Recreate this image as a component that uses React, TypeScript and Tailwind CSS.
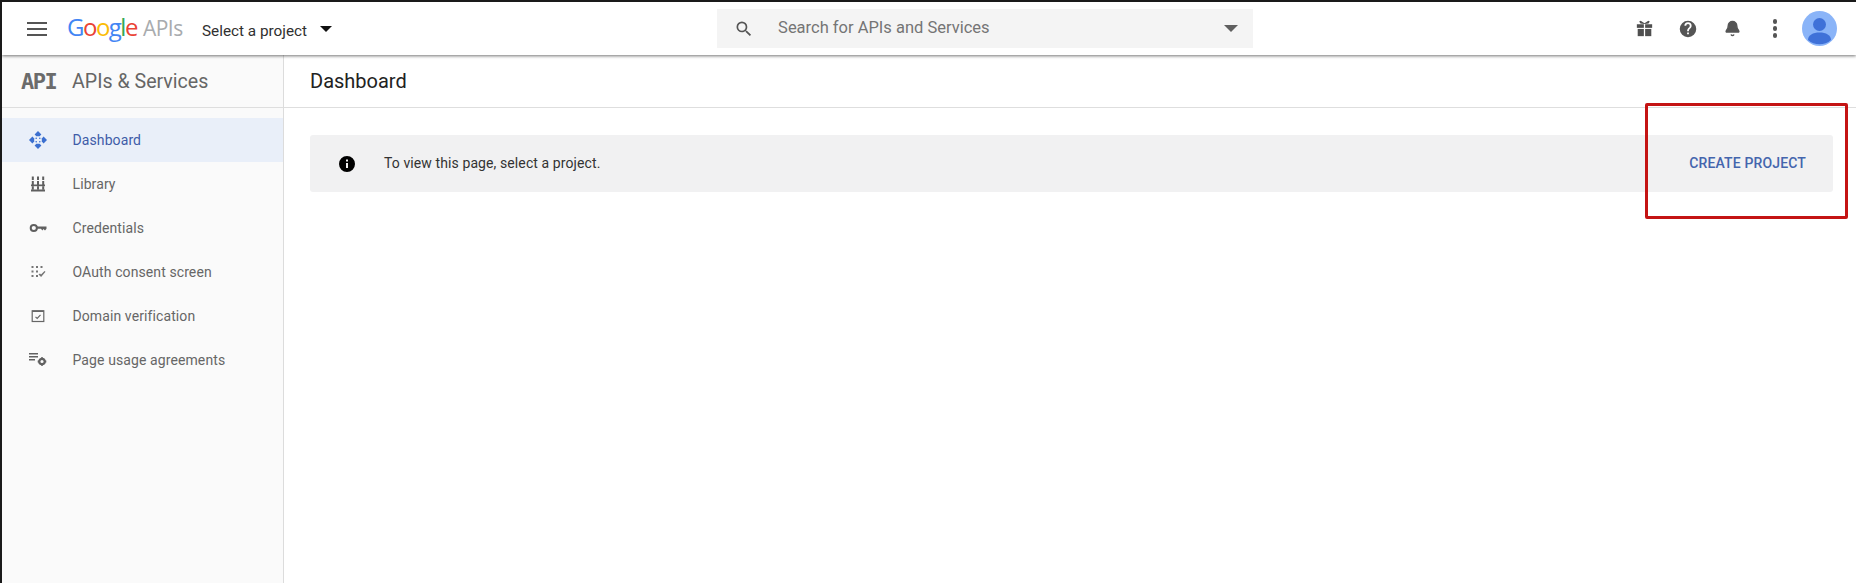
import { Bell } from "lucide-react";

const NAV_ITEMS = [
  { label: "Dashboard", icon: <DashboardIcon />, active: true },
  { label: "Library", icon: <LibraryIcon /> },
  { label: "Credentials", icon: <KeyIcon /> },
  { label: "OAuth consent screen", icon: <ConsentIcon /> },
  { label: "Domain verification", icon: <VerifyIcon /> },
  { label: "Page usage agreements", icon: <AgreementIcon /> },
];

function DashboardIcon() {
  return (
    <svg width="18" height="18" viewBox="0 0 18 18" fill="#3b6fd0">
      <path d="M9 0 12.400 3.400 10.600 5.200H7.400L5.600 3.400Z" />
      <path d="M9 18 12.400 14.600 10.600 12.800H7.400L5.600 14.600Z" />
      <path d="M0 9 3.400 5.600 5.200 7.400V10.600L3.400 12.400Z" />
      <path d="M18 9 14.600 5.600 12.800 7.400V10.600L14.600 12.400Z" />
      <circle cx="7.200" cy="7.200" r="0.800" />
      <circle cx="10.800" cy="7.200" r="0.800" />
      <circle cx="7.200" cy="10.800" r="0.800" />
      <circle cx="10.800" cy="10.800" r="0.800" />
    </svg>
  );
}

function LibraryIcon() {
  return (
    <svg width="16" height="16" viewBox="0 0 16 16" fill="#5f5f5f">
      <rect x="1.800" y="0.500" width="2" height="3.500" />
      <rect x="7" y="0.500" width="2" height="3.500" />
      <rect x="12.200" y="0.500" width="2" height="3.500" />
      <rect x="1.800" y="5" width="2" height="4" />
      <rect x="7" y="5" width="2" height="4" />
      <rect x="12.200" y="5" width="2" height="4" />
      <rect x="1" y="8.500" width="14" height="1.700" />
      <rect x="1.800" y="10.200" width="2" height="3.500" />
      <rect x="7" y="10.200" width="2" height="3.500" />
      <rect x="12.200" y="10.200" width="2" height="3.500" />
      <rect x="1" y="13.500" width="14" height="2" />
    </svg>
  );
}

function KeyIcon() {
  return (
    <svg width="18" height="18" viewBox="0 0 18 18" fill="none">
      <circle cx="4.800" cy="9" r="3.100" stroke="#5f5f5f" strokeWidth="2" />
      <path d="M8 7.600h9.500v2.200l-1.500 1.800-1.500-1.500-1.200 1.400-1.300-1.700H8Z" fill="#5f5f5f" />
    </svg>
  );
}

function ConsentIcon() {
  return (
    <svg width="16" height="16" viewBox="0 0 16 16" fill="#757575">
      <rect x="1.500" y="2" width="2" height="2" />
      <rect x="6" y="2" width="2" height="2" />
      <rect x="10.500" y="2" width="2" height="2" />
      <rect x="1.500" y="6.500" width="2" height="2" />
      <rect x="6" y="6.500" width="2" height="2" />
      <rect x="1.500" y="11" width="2" height="2" />
      <rect x="6" y="11" width="2" height="2" />
      <path d="M8.500 10.500 10 9.500l1 1 3.500-3.500 1 .8-4.400 5.200Z" />
    </svg>
  );
}

function VerifyIcon() {
  return (
    <svg width="14" height="14" viewBox="0 0 14 14" fill="none">
      <rect x="1.200" y="1.800" width="11.600" height="10.700" stroke="#666" strokeWidth="1.200" />
      <rect x="1.200" y="1.500" width="11.600" height="1.500" fill="#666" />
      <path d="M4.500 7.800 6.200 9.500 9.500 5.800" stroke="#666" strokeWidth="1.200" />
    </svg>
  );
}

function AgreementIcon() {
  return (
    <svg width="18" height="18" viewBox="0 0 18 18" fill="#616161">
      <rect x="0" y="2" width="9" height="1.500" />
      <rect x="0" y="5" width="9" height="1.500" />
      <rect x="0" y="8" width="6" height="1.500" />
      <circle cx="13" cy="10.500" r="2.700" fill="none" stroke="#616161" strokeWidth="2.200" />
      <path d="M12 6.200h2v1.600h-2ZM12 13.200h2v1.600h-2ZM8.700 9.500h1.600v2H8.700ZM15.700 9.500h1.600v2h-1.600Z" />
    </svg>
  );
}

function GiftIcon() {
  return (
    <svg className="mr-[26px]" width="17" height="17" viewBox="0 0 16 16" fill="#4f4f4f">
      <rect x="0.800" y="4" width="6.600" height="3.400" />
      <rect x="8.600" y="4" width="6.600" height="3.400" />
      <rect x="1.600" y="8.400" width="5.800" height="6.800" />
      <rect x="8.600" y="8.400" width="5.800" height="6.800" />
      <path d="M8 3.800 4.200 3.400 3 1.500 4.400.6 8 3 11.600.6 13 1.500 11.800 3.400Z" />
    </svg>
  );
}

export default function App() {
  return (
    <div className="relative flex h-[583px] w-[1856px] flex-col overflow-hidden border-t-2 border-l-2 border-[#1a1a1a] bg-white font-['Roboto',sans-serif]">
      <header className="relative z-10 flex h-[53px] shrink-0 items-center bg-white shadow-[0_1px_3px_rgba(0,0,0,0.55)]">
        <button className="ml-[25px] flex w-[20px] flex-col gap-[4px]">
          <span className="h-[2px] bg-[#555]" />
          <span className="h-[2px] bg-[#555]" />
          <span className="h-[2px] bg-[#555]" />
        </button>
        <div className="ml-[20px] flex w-[120px] items-baseline pb-[3px] font-['Open_Sans',sans-serif]">
          <span className="text-[24px] font-medium tracking-[-1.500px]">
            <span className="text-[#4285f4]">G</span>
            <span className="text-[#ea4335]">o</span>
            <span className="text-[#fbbc05]">o</span>
            <span className="text-[#4285f4]">g</span>
            <span className="text-[#34a853]">l</span>
            <span className="text-[#ea4335]">e</span>
          </span>
          <span className="ml-[6px] text-[21px] tracking-[-0.500px] text-[#a8abae]">APIs</span>
        </div>
        <span className="ml-[15px] pt-[5px] text-[15.300px] text-[#303030]">Select a project</span>
        <span className="mt-[1px] ml-[13px] h-0 w-0 border-x-[6px] border-t-[6px] border-x-transparent border-t-[#111]" />
        <div className="ml-[385px] flex h-[39px] w-[536px] items-center bg-[#f4f4f4]">
          <svg className="ml-[17px]" width="20" height="20" viewBox="0 0 24 24" fill="#555">
            <path d="M15.500 14h-.79l-.28-.27A6.471 6.471 0 0 0 16 9.500 6.500 6.500 0 1 0 9.500 16c1.610 0 3.090-.59 4.230-1.570l.27.28v.79l5 4.990L20.490 19l-4.990-5zm-6 0C7.010 14 5 11.990 5 9.500S7.010 5 9.500 5 14 7.010 14 9.500 11.990 14 9.500 14z" />
          </svg>
          <span className="ml-[24px] flex-1 pb-[1px] text-[16.500px] text-[#757575]">Search for APIs and Services</span>
          <span className="mr-[15px] h-0 w-0 border-x-[7px] border-t-[7px] border-x-transparent border-t-[#5f5f5f]" />
        </div>
        <div className="flex flex-1 items-center justify-end pr-[19px]">
          <GiftIcon />
          <svg className="mr-[27px]" width="18" height="18" viewBox="0 0 24 24" fill="#555">
            <path d="M12 1a11 11 0 1 0 0 22 11 11 0 0 0 0-22Zm1.200 18h-2.400v-2.400h2.400V19Zm2.500-8.400-1.100 1.100c-.9.9-1.400 1.700-1.400 3.300h-2.400v-.6c0-1.300.5-2.500 1.400-3.400l1.500-1.500c.4-.4.7-1 .7-1.700a2.400 2.400 0 0 0-4.800 0H7.200a4.800 4.800 0 0 1 9.600 0c0 1.100-.4 2-1.100 2.800Z" />
          </svg>
          <Bell className="mr-[32px]" size={17} color="#555" fill="#555" />
          <div className="mr-[25px] flex flex-col gap-[2.500px]">
            <span className="size-[4.500px] rounded-full bg-[#555]" />
            <span className="size-[4.500px] rounded-full bg-[#555]" />
            <span className="size-[4.500px] rounded-full bg-[#555]" />
          </div>
          <svg width="35" height="35" viewBox="0 0 35 35">
            <circle cx="17.500" cy="17.500" r="17.500" fill="#8ab4f8" />
            <circle cx="17.500" cy="13.500" r="6.500" fill="#3f71d8" />
            <path d="M6 29c0-5 5-7.500 11.500-7.500S29 24 29 29a17.500 17.500 0 0 1-23 0Z" fill="#3f71d8" />
          </svg>
        </div>
      </header>

      <div className="flex flex-1">
        <aside className="flex w-[282px] shrink-0 flex-col border-r border-[#dcdcdc] bg-[#fafafa]">
          <div className="flex h-[53px] items-center border-b border-[#dedede] pl-[19px]">
            <span className="w-[51px] font-['DejaVu_Sans_Mono',monospace] text-[22px] font-bold tracking-[-1.500px] text-[#6b6b6b]">API</span>
            <span className="pt-[2px] text-[19.600px] text-[#666]">APIs &amp; Services</span>
          </div>
          <nav className="mt-[10px] flex flex-col">
            {NAV_ITEMS.map((item) => (
              <a
                key={item.label}
                className={`flex h-[44px] items-center text-[14px] tracking-[0.1px] ${item.active ? "bg-[#e9eff9] text-[#3f5ca8]" : "text-[#666]"}`}
              >
                <span className="flex w-[70.500px] justify-center pl-[2px]">{item.icon}</span>
                {item.label}
              </a>
            ))}
          </nav>
        </aside>

        <main className="flex-1">
          <div className="flex h-[53px] items-center border-b border-[#dedede] pl-[26px] text-[20px] text-[#222]">Dashboard</div>
          <div className="mt-[27px] mr-[23px] ml-[26px] flex h-[57px] items-center rounded-[3px] bg-[#f1f1f2]">
            <svg className="ml-[29px]" width="16" height="16" viewBox="0 0 16 16" fill="#000">
              <path d="M8 0a8 8 0 1 0 0 16A8 8 0 0 0 8 0Zm1 12H7V7h2v5Zm0-6.500H7v-2h2v2Z" />
            </svg>
            <span className="ml-[29px] flex-1 text-[14px] tracking-[0.1px] text-[#333]">To view this page, select a project.</span>
            <button className="mr-[27px] text-[14px] font-medium tracking-[0.15px] text-[#4465ad]">CREATE PROJECT</button>
          </div>
        </main>
      </div>

      <div className="absolute top-[101px] left-[1643px] h-[116px] w-[203px] rounded-[2px] border-[3px] border-[#c41414]" />
    </div>
  );
}
